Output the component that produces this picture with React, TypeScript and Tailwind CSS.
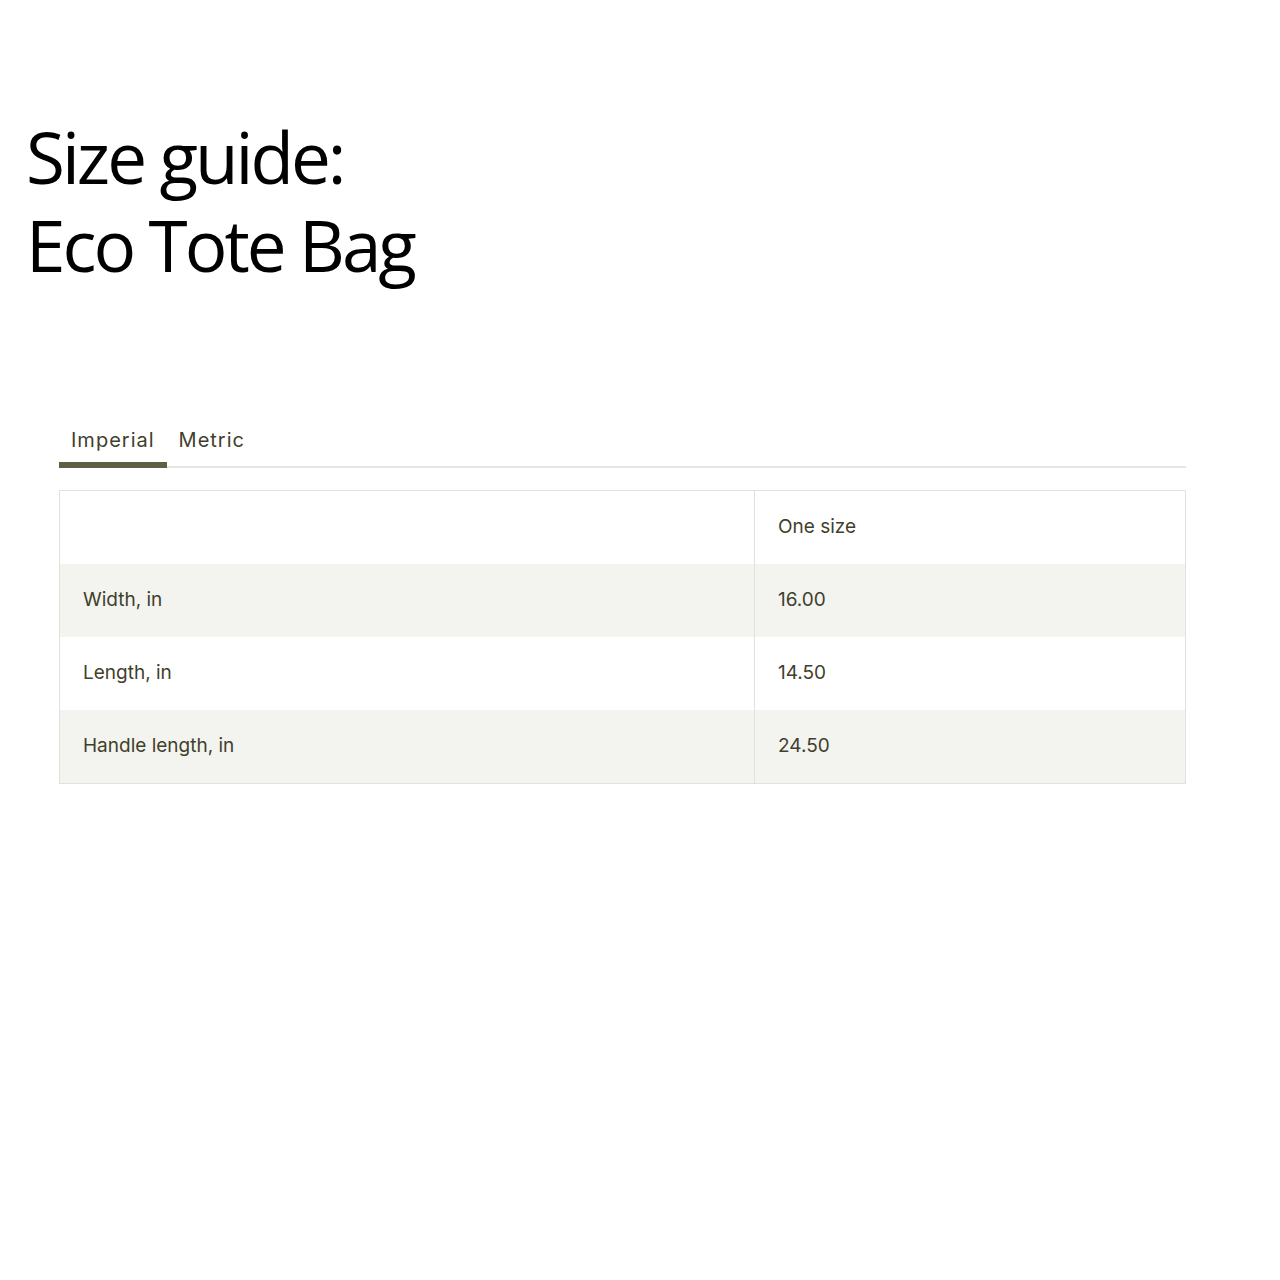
import React, { useState } from 'react';

const rows = [
  { label: 'Width, in', value: '16.00' },
  { label: 'Length, in', value: '14.50' },
  { label: 'Handle length, in', value: '24.50' },
];

const App: React.FC = () => {
  const [tab, setTab] = useState<'imperial' | 'metric'>('imperial');

  return (
    <div className="min-h-[1280px] w-[1280px] bg-white">
      <h1
        className="pl-[26px] pt-[113px] text-[71px] leading-[88px] text-black tracking-[-3px]"
        style={{ fontFamily: '"Open Sans", sans-serif' }}
      >
        Size guide:
        <br />
        Eco Tote Bag
      </h1>

      <div className="mx-[59px] mt-[141px] w-[1127px]" style={{ fontFamily: 'Inter, sans-serif' }}>
        {/* tabs */}
        <div className="flex border-b-2 border-[#e6e6e1]">
          <button
            onClick={() => setTab('imperial')}
            className={`-mb-[2px] px-3 pb-[12px] text-[20px] leading-[20px] tracking-[1px] text-[#3f3f2c] border-b-[6px] ${
              tab === 'imperial' ? 'border-[#5f5f45]' : 'border-transparent'
            }`}
          >
            Imperial
          </button>
          <button
            onClick={() => setTab('metric')}
            className={`-mb-[2px] px-3 pb-[12px] text-[20px] leading-[20px] tracking-[1px] text-[#3f3f2c] border-b-[6px] ${
              tab === 'metric' ? 'border-[#5f5f45]' : 'border-transparent'
            }`}
          >
            Metric
          </button>
        </div>

        {/* table */}
        <div className="mt-[22px] border border-[#e2e2dd] text-[19px] text-[#3f3f2c]">
          <div className="grid grid-cols-[695px_1fr] h-[73px]">
            <div className="border-r border-[#e2e2dd]" />
            <div className="flex items-center pl-[23px]">One size</div>
          </div>
          {rows.map((r, i) => (
            <div
              key={r.label}
              className={`grid grid-cols-[695px_1fr] h-[73px] ${i % 2 === 0 ? 'bg-[#f3f3ef]' : 'bg-white'}`}
            >
              <div className="flex items-center pl-[23px] border-r border-[#e2e2dd]">{r.label}</div>
              <div className="flex items-center pl-[23px]">
                {tab === 'imperial' ? r.value : (parseFloat(r.value) * 2.54).toFixed(2)}
              </div>
            </div>
          ))}
        </div>
      </div>
    </div>
  );
};

export default App;
